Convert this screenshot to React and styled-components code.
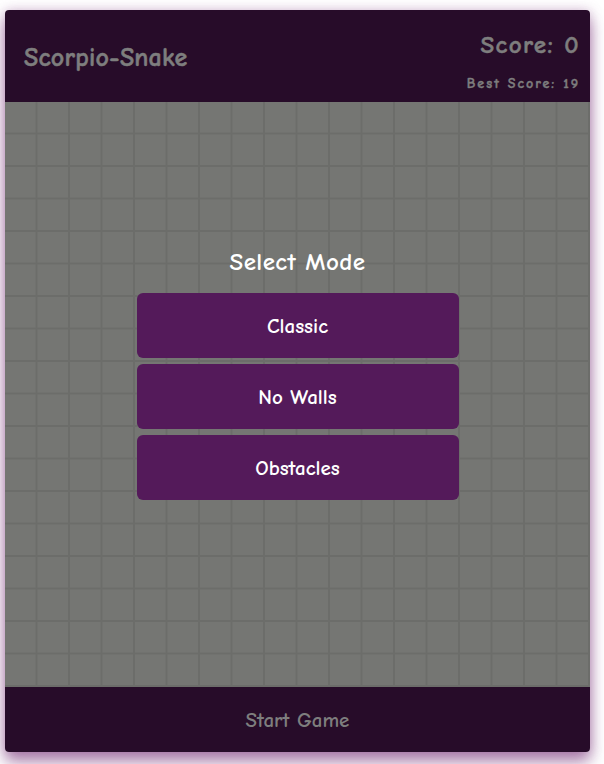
import React from "react";
import styled, { createGlobalStyle } from "styled-components";

const GlobalStyle = createGlobalStyle`
  html, body {
    margin: 0;
    padding: 0;
    background: #ffffff;
  }
  body {
    font-family: "Comic Sans MS", "Comic Neue", "DejaVu Sans", sans-serif;
  }
`;

const Page = styled.div`
  padding: 10px 14px 24px 5px;
`;

const Card = styled.div`
  width: 585px;
  border-radius: 4px;
  overflow: hidden;
  box-shadow: 0 10px 16px rgba(120, 50, 120, 0.6),
    0 0 12px rgba(150, 90, 150, 0.35);
`;

const Header = styled.header`
  height: 92px;
  background: #270c29;
  display: flex;
  justify-content: space-between;
  align-items: stretch;
  padding: 0 10px 0 19px;
  box-sizing: border-box;
  color: #7e7e7e;
`;

const Title = styled.h1`
  margin: 0;
  align-self: center;
  padding-top: 4px;
  font-size: 26px;
  font-weight: bold;
  letter-spacing: 0.2px;
  -webkit-text-stroke: 0.5px #7e7e7e;
`;

const ScoreBox = styled.div`
  display: flex;
  flex-direction: column;
  align-items: flex-end;
  padding-top: 19px;
`;

const Score = styled.div`
  font-size: 25px;
  font-weight: bold;
  letter-spacing: 1.4px;
  line-height: 32px;
  -webkit-text-stroke: 0.5px #7e7e7e;
`;

const Best = styled.div`
  margin-top: 14px;
  font-size: 14px;
  font-weight: bold;
  letter-spacing: 2px;
  -webkit-text-stroke: 0.4px #7e7e7e;
`;

const Board = styled.div`
  position: relative;
  width: 585px;
  height: 585px;
  background-color: #757673;
  background-image: linear-gradient(
      to right,
      transparent calc(100% - 2px),
      #6c6d6a calc(100% - 2px)
    ),
    linear-gradient(
      to bottom,
      transparent calc(100% - 2px),
      #6c6d6a calc(100% - 2px)
    );
  background-size: 32.5px 32.5px;
`;

const Menu = styled.div`
  position: absolute;
  inset: 0;
  display: flex;
  flex-direction: column;
  align-items: center;
  justify-content: center;
  padding-bottom: 42px;
  box-sizing: border-box;
`;

const MenuTitle = styled.h2`
  margin: 0 0 16px;
  font-size: 25px;
  font-weight: bold;
  letter-spacing: 0.4px;
  line-height: 30px;
  color: #ffffff;
`;

const ModeList = styled.div`
  display: flex;
  flex-direction: column;
  gap: 6px;
`;

const ModeButton = styled.button`
  width: 322px;
  height: 65px;
  border: none;
  border-radius: 6px;
  background: #541a5a;
  color: #ffffff;
  font-family: inherit;
  font-size: 21px;
  font-weight: bold;
  cursor: pointer;
`;

const Footer = styled.footer`
  height: 65px;
  background: #270c29;
  display: flex;
  align-items: center;
  justify-content: center;
  font-size: 21px;
  font-weight: bold;
  color: #7e7e7e;
`;

const modes = ["Classic", "No Walls", "Obstacles"];

export default function App() {
  return (
    <>
      <GlobalStyle />
      <Page>
        <Card>
          <Header>
            <Title>Scorpio-Snake</Title>
            <ScoreBox>
              <Score>Score: 0</Score>
              <Best>Best Score: 19</Best>
            </ScoreBox>
          </Header>
          <Board>
            <Menu>
              <MenuTitle>Select Mode</MenuTitle>
              <ModeList>
                {modes.map((m) => (
                  <ModeButton key={m}>{m}</ModeButton>
                ))}
              </ModeList>
            </Menu>
          </Board>
          <Footer>Start Game</Footer>
        </Card>
      </Page>
    </>
  );
}
